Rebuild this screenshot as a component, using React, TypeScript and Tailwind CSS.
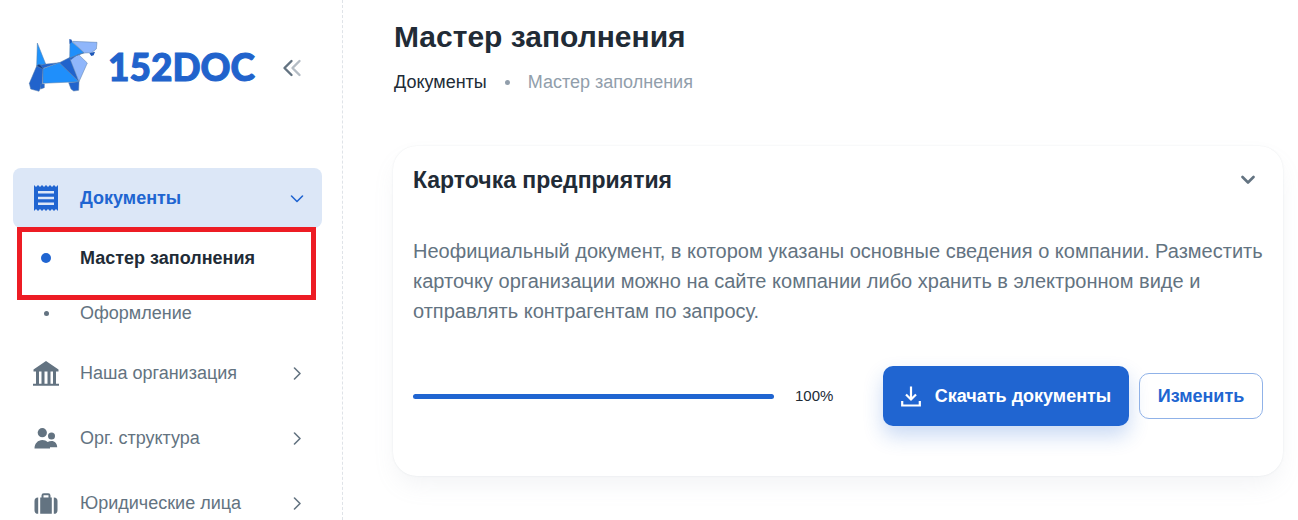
import type { ReactNode } from "react";

function DogLogo() {
  return (
    <svg viewBox="0 0 240 186" className="h-[62px] w-20 shrink-0" aria-hidden="true" strokeLinejoin="round">
      <g stroke="#5b7fa8" strokeWidth="1.5">
        <path fill="#1f93fb" d="M40 27 65 90 49 94 38 96Z" />
        <path fill="#2163cc" d="M38 96 57 103 55 151 45 172 20 165 16 148Z" />
        <path fill="#2163cc" d="M50 150h11v11l-11 4Z" />
        <path fill="#123d8a" d="M38 96 44 91 62 97 56 105Z" />
        <path fill="#2163cc" d="M60 91 106 86 57 103 50 94Z" />
        <path fill="#2163cc" d="M134 146 165 143 164 169 149 171 141 165Z" />
        <path fill="#1f8ffb" d="M57 104 106 86 165 143 57 148Z" />
        <path fill="#2163cc" d="M106 86 138 70 165 143Z" />
        <path fill="#8fb6fb" d="M138 75 161 59 190 87 165 143Z" />
        <path fill="#1f8ffb" d="M138 19 181 56 137 72Z" />
        <path fill="#2163cc" d="M137 72 181 56 160 62 140 78Z" />
        <path fill="#8fb6fb" d="M145 22 219 25 217 45 203 56 181 57Z" />
      </g>
      <path fill="#1d57b8" d="M136 15 143 17 144 24 137 30ZM196 58 213 53 209 64 202 66Z" />
    </svg>
  );
}

function ReceiptIcon() {
  return (
    <svg viewBox="0 0 24 26" className="h-[26px] w-6" fill="currentColor" aria-hidden="true">
      <path
        fillRule="evenodd"
        d="M0 0l2 2 2-2 2 2 2-2 2 2 2-2 2 2 2-2 2 2 2-2 2 2 2-2v26l-2-2-2 2-2-2-2 2-2-2-2 2-2-2-2 2-2-2-2 2-2-2-2 2zM4 6v2.500h16V6zM4 11.700v2.500h16v-2.500zM4 17.500V20h16v-2.500z"
      />
    </svg>
  );
}

function BankIcon() {
  return (
    <svg viewBox="0 0 26 25" className="h-[25px] w-[26px]" fill="currentColor" aria-hidden="true">
      <path d="M13 0 25.500 8.500V10.500H.5V8.500ZM3 10h3v13H3ZM8.500 10h3v13h-3ZM14.500 10h3v13h-3ZM20 10h3v13h-3ZM1 22.800h24a1 1 0 0 1 1 2H0a1 1 0 0 1 1-2Z" />
    </svg>
  );
}

function PeopleIcon() {
  return (
    <svg viewBox="0 0 24 21" className="h-[21px] w-6" fill="currentColor" aria-hidden="true">
      <circle cx="8.300" cy="4.700" r="4.600" />
      <circle cx="17.500" cy="8" r="3.500" />
      <path d="M.5 20.500C.5 15.500 4 12 8.300 12c2.200 0 4 .8 5.400 2.100a7 7 0 0 1 3.800-1.200c3.300 0 5.700 2.600 5.700 6.300H16v1.300Z" />
    </svg>
  );
}

function SuitcaseIcon() {
  return (
    <svg viewBox="0 0 24 21" className="h-[21px] w-6" fill="currentColor" aria-hidden="true">
      <path
        fillRule="evenodd"
        d="M6.200 4.500H7.500V2.500A2.300 2.300 0 0 1 9.800.2h4.400a2.300 2.300 0 0 1 2.300 2.300v2h1.300V20.800H6.200ZM9.500 4.500h5V2.300h-5ZM4.200 4.500H4a3.500 3.500 0 0 0-3.500 3.500v9A3.700 3.700 0 0 0 4.200 20.800ZM19.800 4.500h.2A3.500 3.500 0 0 1 23.500 8v9a3.700 3.700 0 0 1-3.700 3.800Z"
      />
    </svg>
  );
}

function DownloadIcon() {
  return (
    <svg viewBox="0 0 20 21" className="h-[21px] w-5" fill="none" stroke="currentColor" strokeWidth="2.200" aria-hidden="true">
      <path d="M10 .5V13M5 8.500l5 5 5-5M1.200 15v4.500h17.600V15" />
    </svg>
  );
}

function Chevron({ down = false }: { down?: boolean }) {
  return (
    <svg viewBox="0 0 14 14" className="size-3.5" fill="none" stroke="currentColor" strokeWidth="1.600" strokeLinecap="round" strokeLinejoin="round" aria-hidden="true">
      <path d={down ? "M1.500 5 7 10.500 12.500 5" : "M4.500 2 10 7.500l-5.500 5.500"} />
    </svg>
  );
}

function NavItem({ icon, label, active = false }: { icon: ReactNode; label: string; active?: boolean }) {
  return (
    <a
      href="#"
      aria-current={active ? "true" : undefined}
      className={
        active
          ? "flex h-15 shrink-0 items-center rounded-lg bg-[#dce7f7] pr-[18px] pl-5 text-lg font-bold text-[#2065d1]"
          : "flex h-15 shrink-0 items-center rounded-lg pr-[18px] pl-5 text-lg text-[#637381]"
      }
    >
      <span className="flex w-[26px] shrink-0 justify-center">{icon}</span>
      <span className="ml-[21px] flex-1">{label}</span>
      <Chevron down={active} />
    </a>
  );
}

function SubItem({ label, active = false }: { label: string; active?: boolean }) {
  return (
    <a
      href="#"
      aria-current={active ? "page" : undefined}
      className={
        active
          ? "relative flex h-[50px] shrink-0 items-center pl-5 text-lg font-bold text-[#212b36]"
          : "flex h-[50px] shrink-0 items-center pl-5 text-lg text-[#637381]"
      }
    >
      <span className="flex w-[26px] shrink-0 justify-center">
        <span className={active ? "size-2.5 rounded-full bg-[#2065d1]" : "size-[5px] rounded-full bg-[#637381]"} />
      </span>
      <span className="ml-[21px]">{label}</span>
      {active && <span className="absolute -top-1.5 right-1.5 -bottom-[17px] left-1 border-5 border-[#ed1c24]" />}
    </a>
  );
}

function Sidebar() {
  return (
    <aside className="sticky top-0 flex h-screen w-[343px] shrink-0 flex-col overflow-hidden border-r border-dashed border-[#dfe3e8] pr-5 pl-[13px]">
      <div className="flex h-[168px] shrink-0 items-start pt-[34px] pl-[11px]">
        <a href="#" className="flex items-center">
          <DogLogo />
          <span className="ml-1 pt-1 font-[Lato,sans-serif] text-[37px] leading-[58px] font-black text-[#2163cc] [-webkit-text-stroke:1px_#2163cc]">
            152DOC
          </span>
        </a>
        <button type="button" aria-label="Свернуть меню" className="mt-[25px] mr-5 ml-auto">
          <svg viewBox="0 0 20 18" className="h-[18px] w-5" fill="none" strokeWidth="2.400" strokeLinecap="round" strokeLinejoin="round" aria-hidden="true">
            <path d="M17.500 2 10.500 9l7 7" stroke="#b4bcc4" />
            <path d="M9.500 2 2.500 9l7 7" stroke="#637381" />
          </svg>
        </button>
      </div>
      <nav className="flex flex-col gap-[5px]">
        <NavItem icon={<ReceiptIcon />} label="Документы" active />
        <SubItem label="Мастер заполнения" active />
        <SubItem label="Оформление" />
        <NavItem icon={<BankIcon />} label="Наша организация" />
        <NavItem icon={<PeopleIcon />} label="Орг. структура" />
        <NavItem icon={<SuitcaseIcon />} label="Юридические лица" />
      </nav>
    </aside>
  );
}

export default function App() {
  return (
    <div className="flex min-h-screen bg-white font-['Liberation_Sans',Arial,sans-serif] text-[#212b36]">
      <Sidebar />
      <main className="min-w-0 flex-1 pt-[17px] pr-[15px] pl-[50px]">
        <header className="pl-px">
          <h1 className="text-[30px] leading-10 font-bold">Мастер заполнения</h1>
          <nav aria-label="Навигация" className="mt-[11px] flex items-center text-lg leading-7">
            <a href="#">Документы</a>
            <span className="mx-[18px] size-[5px] rounded-full bg-[#919eab]" />
            <span className="text-[#919eab]">Мастер заполнения</span>
          </nav>
        </header>
        <section className="mt-[50px] rounded-3xl bg-white px-5 pt-[18px] pb-[50px] shadow-[0_0_2px_0_rgba(145,158,171,0.2),0_12px_24px_-4px_rgba(145,158,171,0.12)]">
          <div className="flex items-center justify-between">
            <h2 className="text-[23px] leading-8 font-bold">Карточка предприятия</h2>
            <button type="button" aria-label="Свернуть" className="mr-2 text-[#637381]">
              <svg viewBox="0 0 14 10" className="h-2.5 w-3.5" fill="none" stroke="currentColor" strokeWidth="2.600" strokeLinecap="round" strokeLinejoin="round" aria-hidden="true">
                <path d="M1.500 2 7 7.500 12.500 2" />
              </svg>
            </button>
          </div>
          <p className="mt-10 text-xl leading-[30px] text-[#637381]">
            Неофициальный документ, в котором указаны основные сведения о компании. Разместить карточку организации можно на
            сайте компании либо хранить в электронном виде и отправлять контрагентам по запросу.
          </p>
          <div className="mt-10 flex items-center">
            <div role="progressbar" aria-label="Заполнено" aria-valuenow={100} aria-valuemin={0} aria-valuemax={100} className="h-[5px] flex-1 rounded-full bg-[#2065d1]" />
            <span className="w-[109px] pl-[21px] text-[15px]">100%</span>
            <button type="button" className="flex h-15 w-[246px] items-center justify-center gap-3.5 rounded-[10px] bg-[#2065d1] text-lg font-bold text-white shadow-[0_10px_20px_0_rgba(32,101,209,0.24)]">
              <DownloadIcon />
              Скачать документы
            </button>
            <button type="button" className="ml-2.5 h-[46px] w-[124px] rounded-[10px] border border-[#90b2e8] text-lg font-bold text-[#2065d1]">
              Изменить
            </button>
          </div>
        </section>
      </main>
    </div>
  );
}
